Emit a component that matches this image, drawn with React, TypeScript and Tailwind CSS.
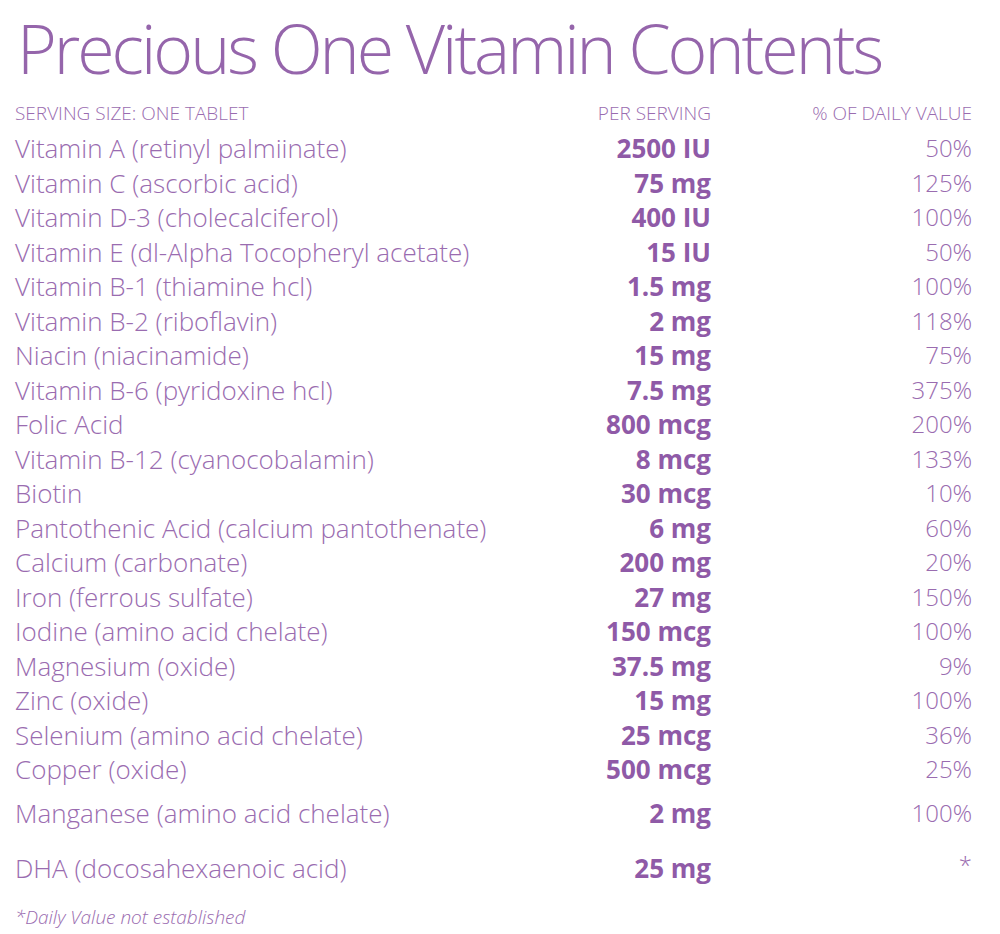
const ROWS: [string, string, string, string?][] = [
  ["Vitamin A (retinyl palmiinate)", "2500 IU", "50%"],
  ["Vitamin C (ascorbic acid)", "75 mg", "125%"],
  ["Vitamin D-3 (cholecalciferol)", "400 IU", "100%"],
  ["Vitamin E (dl-Alpha Tocopheryl acetate)", "15 IU", "50%"],
  ["Vitamin B-1 (thiamine hcl)", "1.5 mg", "100%"],
  ["Vitamin B-2 (riboflavin)", "2 mg", "118%"],
  ["Niacin (niacinamide)", "15 mg", "75%"],
  ["Vitamin B-6 (pyridoxine hcl)", "7.5 mg", "375%"],
  ["Folic Acid", "800 mcg", "200%"],
  ["Vitamin B-12 (cyanocobalamin)", "8 mcg", "133%"],
  ["Biotin", "30 mcg", "10%"],
  ["Pantothenic Acid (calcium pantothenate)", "6 mg", "60%"],
  ["Calcium (carbonate)", "200 mg", "20%"],
  ["Iron (ferrous sulfate)", "27 mg", "150%"],
  ["Iodine (amino acid chelate)", "150 mcg", "100%"],
  ["Magnesium (oxide)", "37.5 mg", "9%"],
  ["Zinc (oxide)", "15 mg", "100%"],
  ["Selenium (amino acid chelate)", "25 mcg", "36%"],
  ["Copper (oxide)", "500 mcg", "25%"],
  ["Manganese (amino acid chelate)", "2 mg", "100%", "h-[52px]"],
];

function Row({ name, amount, pct, h }: { name: string; amount: string; pct: string; h?: string }) {
  return (
    <div className={`grid grid-cols-[1fr_180px_261px] items-center ${h ?? "h-[34.5px]"}`}>
      <span className="text-[26px] font-light text-[#9a6cb0] whitespace-nowrap">{name}</span>
      <span className="text-right text-[26px] font-bold text-[#8f5aa7]">{amount}</span>
      <span className="text-right text-[24px] font-light text-[#9a6cb0]">{pct}</span>
    </div>
  );
}

export default function App() {
  return (
    <div className="w-[1000px] h-[934px] bg-white pl-[15px] pr-[28px] font-['Open_Sans',sans-serif] leading-none">
      <h1 className="pt-[14px] h-[95px] text-[68px] font-light text-[#9565ab] leading-none tracking-[-3px] pl-[2px] whitespace-nowrap">
        Precious One Vitamin Contents
      </h1>

      <div className="grid grid-cols-[1fr_180px_261px] items-center h-[36px] text-[19px] font-light text-[#9a6cb0] uppercase">
        <span>Serving Size: One Tablet</span>
        <span className="text-right">Per Serving</span>
        <span className="text-right">% of Daily Value</span>
      </div>

      {ROWS.map(([name, amount, pct, h]) => (
        <Row key={name} name={name} amount={amount} pct={pct} h={h} />
      ))}

      <div className="h-[58px] grid grid-cols-[1fr_180px_261px] items-center">
        <span className="text-[26px] font-light text-[#9a6cb0]">DHA (docosahexaenoic acid)</span>
        <span className="text-right text-[26px] font-bold text-[#8f5aa7]">25 mg</span>
        <span className="text-right text-[24px] font-light text-[#9a6cb0] self-start pt-[14px]">*</span>
      </div>

      <p className="mt-[11px] text-[19px] italic font-light text-[#9a6cb0]">*Daily Value not established</p>
    </div>
  );
}
